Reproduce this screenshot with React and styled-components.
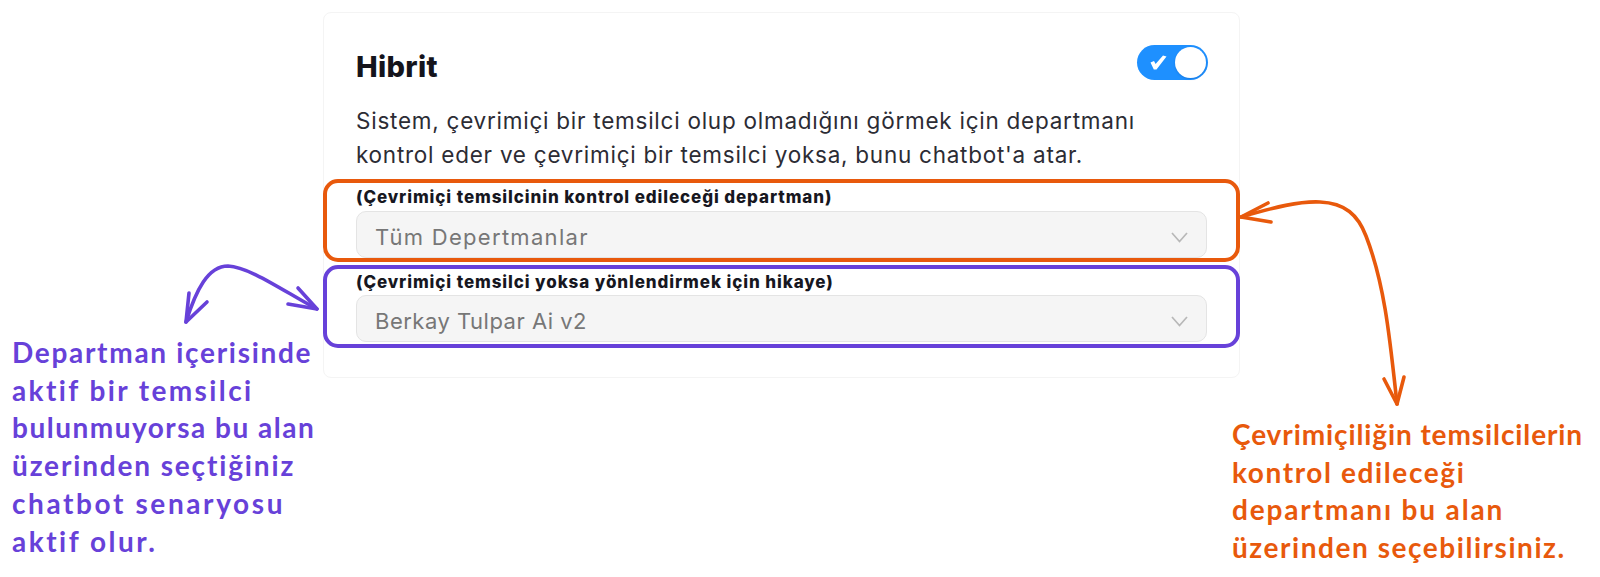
import React from "react";
import styled, { createGlobalStyle } from "styled-components";

const Global = createGlobalStyle`
  html, body { margin: 0; padding: 0; background: #fff; }
  body { font-family: "Inter", "Noto Sans", sans-serif; }
`;

const Canvas = styled.div`
  position: relative;
  width: 1600px;
  height: 577px;
  overflow: hidden;
  padding: 12px 0 0 323px;
  box-sizing: border-box;
`;

const Card = styled.section`
  width: 917px;
  height: 366px;
  box-sizing: border-box;
  border: 1px solid #f4f4f4;
  border-radius: 8px;
  padding: 32px 32px 0 32px;
  background: #fff;
`;

const Header = styled.header`
  display: flex;
  align-items: center;
  justify-content: space-between;
  height: 35px;
`;

const Title = styled.h2`
  margin: 8px 0 0;
  font-size: 29px;
  font-weight: 800;
  letter-spacing: 0.3px;
  color: #14141c;
`;

const Toggle = styled.div`
  width: 71px;
  height: 35px;
  margin-right: -1px;
  border-radius: 18px;
  background: #1e90ff;
  display: flex;
  align-items: center;
  justify-content: space-between;
  padding: 0 2px 0 13px;
  box-sizing: border-box;
  color: #fff;
`;

const Knob = styled.span`
  width: 31px;
  height: 31px;
  border-radius: 50%;
  background: #fff;
  box-shadow: 0 1px 2px rgba(0, 60, 140, 0.25);
`;

const Description = styled.p`
  margin: 24px 0 7px;
  width: 800px;
  font-size: 22.5px;
  line-height: 34px;
  letter-spacing: 0.75px;
  color: #2c2c34;
`;

const Field = styled.div`
  margin: 0 -33px;
  padding: ${(p) => p.$top}px 29px 0;
  height: 83px;
  box-sizing: border-box;
  border: 4px solid ${(p) => p.$color};
  border-radius: 15px;
  & + & { margin-top: 3px; }
`;

const Label = styled.div`
  font-size: 17px;
  line-height: 20px;
  font-weight: 800;
  letter-spacing: 0.9px;
  color: #17171f;
  white-space: nowrap;
`;

const Select = styled.div`
  margin-top: ${(p) => p.$gap}px;
  height: 47px;
  box-sizing: border-box;
  border: 1px solid #e4e4e4;
  border-radius: 10px;
  background: #f5f5f5;
  display: flex;
  align-items: center;
  justify-content: space-between;
  padding: 5px 18px 0 18px;
  color: #777;
  font-size: 22px;
  letter-spacing: ${(p) => p.$track}px;
`;

const Arrows = styled.svg`
  position: absolute;
  inset: 0;
  pointer-events: none;
`;

const Note = styled.div`
  position: absolute;
  left: ${(p) => p.$x}px;
  top: ${(p) => p.$y}px;
  color: ${(p) => p.$color};
  font-family: "Lato", sans-serif;
  font-weight: 700;
  font-size: 28px;
  line-height: 37.7px;
  white-space: nowrap;
`;

const NoteLine = styled.div`
  letter-spacing: ${(p) => p.$track}px;
`;

const Chevron = () => (
  <svg width="17" height="11" viewBox="0 0 17 11" fill="none" stroke="#b8b8b8" strokeWidth="1.7">
    <path d="M1 1l7.5 8.5L16 1" />
  </svg>
);

const Check = () => (
  <svg width="17" height="15" viewBox="0 0 17 15" fill="#fff">
    <path d="M0.5 7.5l3.5-1.6 1.6 3L13 0.5l3.5 1L6.5 14.5H3.8z" />
  </svg>
);

export default function App() {
  return (
    <Canvas>
      <Global />
      <Card>
        <Header>
          <Title>Hibrit</Title>
          <Toggle>
            <Check />
            <Knob />
          </Toggle>
        </Header>
        <Description>
          Sistem, çevrimiçi bir temsilci olup olmadığını görmek için departmanı kontrol eder ve çevrimiçi bir temsilci yoksa, bunu chatbot'a atar.
        </Description>
        <Field $color="#e8590c" $top={4}>
          <Label>(Çevrimiçi temsilcinin kontrol edileceği departman)</Label>
          <Select $track={1.3} $gap={4}>Tüm Depertmanlar<Chevron /></Select>
        </Field>
        <Field $color="#6741d9" $top={3}>
          <Label>(Çevrimiçi temsilci yoksa yönlendirmek için hikaye)</Label>
          <Select $track={0.5} $gap={3}>Berkay Tulpar Ai v2<Chevron /></Select>
        </Field>
      </Card>
      <Arrows width="1600" height="577" viewBox="0 0 1600 577" fill="none" strokeWidth="3.6" strokeLinecap="round" strokeLinejoin="round">
        <g stroke="#6741d9">
          <path d="M186 322C196 290 208 266 228 266C250 267 285 292 317 309" />
          <path d="M189 293L186 322L207 302" />
          <path d="M298 288L317 309L288 304" />
        </g>
        <g stroke="#e8590c">
          <path d="M1241 217C1275 207 1300 201 1320 202C1345 203 1358 215 1366 236C1385 285 1390 340 1397 404" />
          <path d="M1268 203L1241 217L1271 222" />
          <path d="M1384 379L1397 404L1404 377" />
        </g>
      </Arrows>
      <Note $x={12} $y={334} $color="#6741d9">
        <NoteLine $track={1.7}>Departman içerisinde</NoteLine>
        <NoteLine $track={2.4}>aktif bir temsilci</NoteLine>
        <NoteLine $track={1.5}>bulunmuyorsa bu alan</NoteLine>
        <NoteLine $track={1.85}>üzerinden seçtiğiniz</NoteLine>
        <NoteLine $track={2.6}>chatbot senaryosu</NoteLine>
        <NoteLine $track={2.5}>aktif olur.</NoteLine>
      </Note>
      <Note $x={1232} $y={416} $color="#e8590c">
        <NoteLine $track={0.9}>Çevrimiçiliğin temsilcilerin</NoteLine>
        <NoteLine $track={1.6}>kontrol edileceği</NoteLine>
        <NoteLine $track={1.85}>departmanı bu alan</NoteLine>
        <NoteLine $track={1.55}>üzerinden seçebilirsiniz.</NoteLine>
      </Note>
    </Canvas>
  );
}
